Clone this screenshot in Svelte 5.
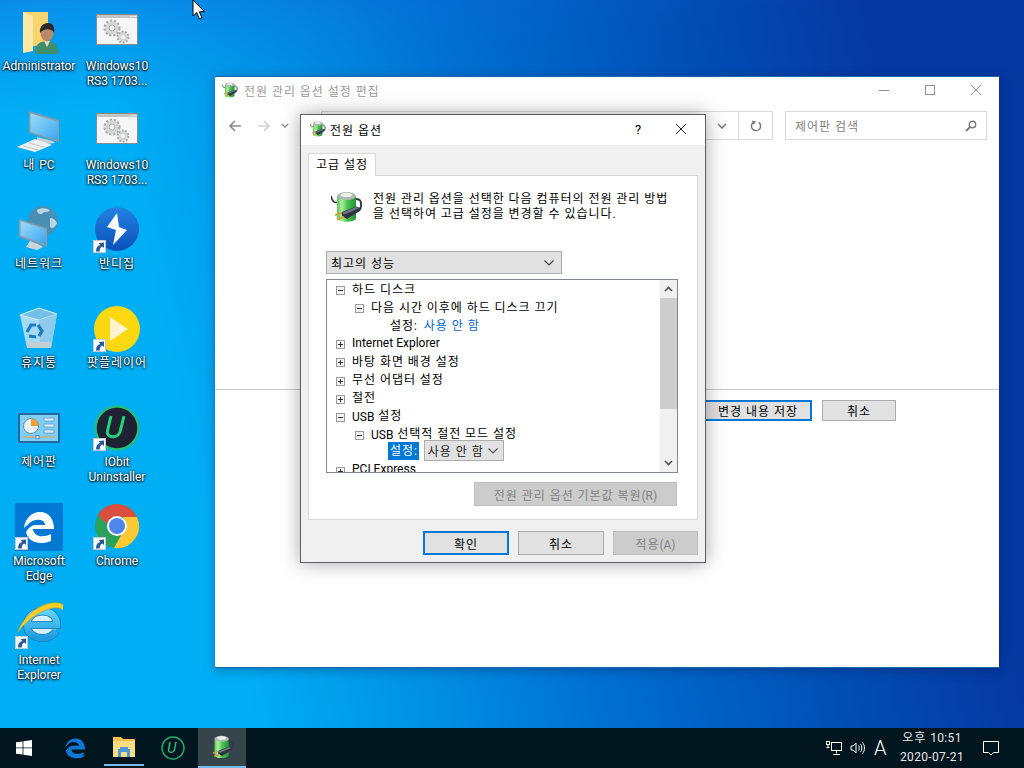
<script>
    const tree = [
        { level: 0, box: 'minus', text: '하드 디스크' },
        { level: 1, box: 'minus', text: '다음 시간 이후에 하드 디스크 끄기' },
        { level: 2, label: '설정:', value: '사용 안 함' },
        { level: 0, box: 'plus', text: 'Internet Explorer' },
        { level: 0, box: 'plus', text: '바탕 화면 배경 설정' },
        { level: 0, box: 'plus', text: '무선 어댑터 설정' },
        { level: 0, box: 'plus', text: '절전' },
        { level: 0, box: 'minus', text: 'USB 설정' },
        { level: 1, box: 'minus', text: 'USB 선택적 절전 모드 설정' },
        { level: 2, label: '설정:', select: '사용 안 함' },
        { level: 0, box: 'plus', text: 'PCI Express' }
    ];

    // latin words get no extra tracking, hangul does
    const runs = (text) => text.split(/([A-Za-z]+(?: [A-Za-z]+)*)/).filter(Boolean);
</script>

{#snippet shortcut()}
    <svg class="shortcut" viewBox="0 0 13 13">
        <rect x="0.5" y="0.5" width="12" height="12" fill="#fff" stroke="#c4c8d0" />
        <path d="M3 11.500 C3 7.500 4.500 5.500 7.200 5 L5.800 3 L11 2.500 L11 8 L9.200 6.400 C7.500 7 6.800 8.500 6.800 11.500Z" fill="#2a5a9e" />
    </svg>
{/snippet}

{#snippet chevron(color)}
    <svg class="chevron" viewBox="0 0 10 6"><path d="M0.5 0.5 L5 5 L9.5 0.5" fill="none" stroke={color} stroke-width="1.2" /></svg>
{/snippet}

{#snippet power(size)}
    <svg width={size} height={size} viewBox="0 0 32 32">
        <defs>
            <linearGradient id="cell" x1="0" x2="1" y1="0" y2="0">
                <stop offset="0" stop-color="#58c556" />
                <stop offset="0.25" stop-color="#aeeea0" />
                <stop offset="0.55" stop-color="#4cc24c" />
                <stop offset="1" stop-color="#23913a" />
            </linearGradient>
        </defs>
        <path d="M0 5 C1 11 4 12 7 11" fill="none" stroke="#343c4a" stroke-width="1.7" />
        <path d="M6 5 L25 5 L25 27 C25 32 6 32 6 27Z" fill="url(#cell)" />
        <ellipse cx="15.500" cy="5" rx="9.500" ry="4" fill="#aeb9b2" />
        <ellipse cx="15.500" cy="4" rx="6" ry="2.200" fill="#eef2ee" />
        <path d="M25 8 C31 8 31 14 29 19" fill="none" stroke="#343c4a" stroke-width="2" />
        <path d="M11 21 L25 15.500 L30 17 L29 20 L16 28 L11 25Z" fill="#2f3642" />
        <path d="M11.500 21.500 L25 16 L28 17.300 L13 23.500Z" fill="#6e7888" />
        <path d="M11 22 L4 24 M13 26 L6 28.500" stroke="#c9a640" stroke-width="2.200" />
    </svg>
{/snippet}

{#snippet gears()}
    <svg width="48" height="48" viewBox="0 0 48 48">
        <rect x="3.500" y="6.500" width="41" height="30" fill="#f6f6f6" stroke="#8b8b8b" />
        <rect x="4" y="7" width="40" height="3" fill="#c4c4c4" />
        <path d="M37 8.500h1.500M39.500 8.500h1.500M42 8.500h1.500" stroke="#fff" />
        <circle cx="19" cy="20" r="5" fill="none" stroke="#d4d6d8" stroke-width="3.500" />
        <circle cx="19" cy="20" r="7.500" fill="none" stroke="#a8aaac" stroke-width="2" stroke-dasharray="2.400 1.700" />
        <circle cx="19" cy="20" r="3" fill="none" stroke="#a8aaac" stroke-width="1" />
        <circle cx="30" cy="29" r="3.500" fill="none" stroke="#d4d6d8" stroke-width="3" />
        <circle cx="30" cy="29" r="5.500" fill="none" stroke="#a8aaac" stroke-width="1.800" stroke-dasharray="2 1.400" />
    </svg>
{/snippet}

<div class="desktop">
    <div class="wall">
        <div class="icons">
            <div class="icon">
                <div class="pic">
                    <svg width="48" height="48" viewBox="0 0 48 48">
                        <path d="M8 4 L33 4 L33 36 L8 40Z" fill="#f8d46e" />
                        <path d="M8 4 L18 8 L18 43 L8 45Z" fill="#fde9a4" />
                        <path d="M20 46 C20 36 25 33 32 33 C39 33 43 36 43 46Z" fill="#3f8f6c" />
                        <path d="M29 33 L32 39 L35 33Z" fill="#e8dccb" />
                        <ellipse cx="32" cy="25" rx="6.500" ry="8.500" fill="#b98a68" />
                        <path d="M25 25 C24 17 30 15 33 15 C38 15 40 19 39 25 C37 20 29 20 25 25Z" fill="#2c2a2a" />
                    </svg>
                </div>
                <span class="lat">Administrator</span>
            </div>
            <div class="icon">
                <div class="pic">
                    <svg width="48" height="48" viewBox="0 0 48 48">
                        <defs>
                            <linearGradient id="screen" x1="0" x2="1" y1="0" y2="1">
                                <stop offset="0" stop-color="#9adcfb" />
                                <stop offset="1" stop-color="#3da6ee" />
                            </linearGradient>
                        </defs>
                        <path d="M14 4 L44 13 L44 35 L14 26Z" fill="#8d9aa6" />
                        <path d="M15.500 6.500 L42.800 14.500 L42.800 33 L15.500 25Z" fill="url(#screen)" />
                        <path d="M22 30 L38 34 L40 36 L32 37 L22 33Z" fill="#c9d0d6" />
                        <path d="M2 40 L20 32 L37 38 L20 45Z" fill="#eef1f3" />
                        <path d="M8 39 L23 43 M14 36 L29 40" stroke="#b4bcc2" stroke-width="0.800" />
                    </svg>
                </div>
                <span>내 <span class="lat">PC</span></span>
            </div>
            <div class="icon">
                <div class="pic">
                    <svg width="48" height="48" viewBox="0 0 48 48">
                        <circle cx="28" cy="15" r="15" fill="#4a8fb6" />
                        <path d="M22 4 C26 1.500 32 2 35 4.500 C32 7 29 5 27 8 C24 8.500 22 7 22 4Z M35 12 C38 12 41 14 42 17 C40 22 37 23 35 21Z" fill="#b8d6e4" />
                        <path d="M4 13 L32 22 L32 41 L4 31Z" fill="#8c99a5" />
                        <path d="M5.500 15 L30.500 23 L30.500 38.500 L5.500 29.500Z" fill="url(#screen)" />
                        <path d="M15 35 L25 39 L28 41 L22 44 L11 41Z" fill="#d0d5da" />
                    </svg>
                </div>
                <span>네트워크</span>
            </div>
            <div class="icon">
                <div class="pic">
                    <svg width="48" height="48" viewBox="0 0 48 48">
                        <path d="M5 10 L24 3 L42 9 L36 43 L12 43Z" fill="#a6dbf4" />
                        <path d="M5 10 L24 3 L42 9 L24 15Z" fill="#74bfe6" stroke="#d6eef9" />
                        <path d="M24 15 L42 9 L36 43 L25 43Z" fill="#8ecbea" />
                        <path d="M12 37 L36 37 L36 43 L12 43Z" fill="#c2ced4" />
                        <path d="M12 27 L16 20 L21 20 M23 20 L27 26 L24 31 M21 32 L14 31" fill="none" stroke="#1d78c8" stroke-width="3.200" />
                    </svg>
                </div>
                <span>휴지통</span>
            </div>
            <div class="icon">
                <div class="pic">
                    <svg width="48" height="48" viewBox="0 0 48 48">
                        <rect x="3" y="9" width="42" height="30" fill="#1e6aa0" />
                        <rect x="5" y="11" width="38" height="26" fill="#80cdf5" />
                        <circle cx="16" cy="22" r="7.500" fill="#e8f2f8" stroke="#6090b0" />
                        <path d="M16 22 L16 14.500 A7.500 7.500 0 0 1 23.500 22Z" fill="#f0a030" />
                        <path d="M29 14h10v3h-10zM29 20h10v3h-10zM29 26h10v3h-10z" fill="#d8ecf8" stroke="#4a8ab8" stroke-width="0.600" />
                        <path d="M8 33h32" stroke="#f0a030" stroke-width="1" />
                        <rect x="21" y="31.500" width="3" height="3" fill="#fff" stroke="#1e6aa0" stroke-width="0.700" />
                    </svg>
                </div>
                <span>제어판</span>
            </div>
            <div class="icon">
                <div class="pic">
                    <svg width="48" height="48" viewBox="0 0 48 48">
                        <rect width="48" height="48" fill="#0078d4" />
                        <path d="M9 25 C10 16 16 9 25 9 C34 9 39 16 39 26 L18 26 C18.500 33 27 35.500 36 31 L36 38 C25 42.500 13 39.500 11 29 C13 25.500 16 22.500 20 22 L30 22 C30 16 20 15 14.500 20 C12.500 22 10.500 23.500 9 25Z" fill="#fff" />
                    </svg>
                    {@render shortcut()}
                </div>
                <span class="lat">Microsoft<br />Edge</span>
            </div>
            <div class="icon">
                <div class="pic">
                    <svg width="48" height="48" viewBox="0 0 48 48">
                        <defs>
                            <linearGradient id="iebody" x1="0" x2="0" y1="0" y2="1">
                                <stop offset="0" stop-color="#5fd2f6" />
                                <stop offset="1" stop-color="#1f9cdf" />
                            </linearGradient>
                        </defs>
                        <ellipse cx="27" cy="22" rx="15" ry="12" fill="#d8f2fc" />
                        <path d="M13 23 L42 23 C42 14 36 9.500 27.500 9.500 C18 9.500 12 15 12 23 C12 31 19 36 27.500 36 C33 36 38 34 41 29" fill="none" stroke="#1878b4" stroke-width="8" />
                        <path d="M13 23 L42 23 C42 14 36 9.500 27.500 9.500 C18 9.500 12 15 12 23 C12 31 19 36 27.500 36 C33 36 38 34 41 29" fill="none" stroke="url(#iebody)" stroke-width="6.500" />
                        <path d="M3 30 C8 14 28 -2 44 1 C52 3 53 8 51 13 C49 7 44 5 38 6 C24 8 10 20 3 30Z" fill="#f6cf2a" stroke="#d49a18" stroke-width="0.600" />
                    </svg>
                    {@render shortcut()}
                </div>
                <span class="lat">Internet<br />Explorer</span>
            </div>
            <div class="icon">
                <div class="pic">{@render gears()}</div>
                <span class="lat">Windows10<br />RS3 1703...</span>
            </div>
            <div class="icon">
                <div class="pic">{@render gears()}</div>
                <span class="lat">Windows10<br />RS3 1703...</span>
            </div>
            <div class="icon">
                <div class="pic">
                    <svg width="48" height="48" viewBox="0 0 48 48">
                        <defs>
                            <linearGradient id="zip" x1="0" x2="0" y1="0" y2="1">
                                <stop offset="0" stop-color="#2283e4" />
                                <stop offset="1" stop-color="#0b50b8" />
                            </linearGradient>
                        </defs>
                        <circle cx="24" cy="23" r="22" fill="url(#zip)" />
                        <path d="M24 7 L14 21 L23 24 L20 39 L34 24 L26 21Z" fill="#fff" />
                    </svg>
                    {@render shortcut()}
                </div>
                <span>반디집</span>
            </div>
            <div class="icon">
                <div class="pic">
                    <svg width="48" height="48" viewBox="0 0 48 48">
                        <circle cx="24" cy="24" r="23" fill="#fbd80f" />
                        <path d="M17 12 L35 24 L17 36Z" fill="#fff4cf" />
                    </svg>
                    {@render shortcut()}
                </div>
                <span>팟플레이어</span>
            </div>
            <div class="icon">
                <div class="pic">
                    <svg width="48" height="48" viewBox="0 0 48 48">
                        <circle cx="24" cy="24" r="21.500" fill="#1e2233" stroke="#22bd7c" stroke-width="2.500" />
                        <path d="M18 12 L14.500 27 C13 34 24 35 27 28 L31 12" fill="none" stroke="#1fd67f" stroke-width="3" />
                    </svg>
                    {@render shortcut()}
                </div>
                <span class="lat">IObit<br />Uninstaller</span>
            </div>
            <div class="icon">
                <div class="pic">
                    <svg width="48" height="48" viewBox="0 0 48 48">
                        <circle cx="24" cy="23" r="22" fill="#2ba25b" />
                        <path d="M5 12 A22 22 0 0 1 44 14 L24 14 C19 14 15 17 14 21Z" fill="#db4d3f" />
                        <path d="M44 14 A22 22 0 0 1 21 45 L31 27 C33 23 33 18 30 14Z" fill="#fcc934" />
                        <circle cx="24" cy="23" r="10" fill="#fff" />
                        <circle cx="24" cy="23" r="8" fill="#4f86ec" />
                    </svg>
                    {@render shortcut()}
                </div>
                <span class="lat">Chrome</span>
            </div>
        </div>

        <section class="window">
            <header class="win-title">
                {@render power(16)}
                <span>전원 관리 옵션 설정 편집</span>
                <div class="win-ctrl">
                    <svg width="12" height="12" viewBox="0 0 12 12"><path d="M1 6.500h10" stroke="#8f8f8f" /></svg>
                    <svg width="12" height="12" viewBox="0 0 12 12"><rect x="1.500" y="1.500" width="9" height="9" fill="none" stroke="#8f8f8f" /></svg>
                    <svg width="12" height="12" viewBox="0 0 12 12"><path d="M1 1l10 10M11 1L1 11" stroke="#8f8f8f" /></svg>
                </div>
            </header>
            <div class="win-nav">
                <svg class="nav-a" width="14" height="14" viewBox="0 0 14 14"><path d="M13 7H2M7 2L2 7l5 5" fill="none" stroke="#8a8a8a" stroke-width="1.600" /></svg>
                <svg class="nav-b" width="14" height="14" viewBox="0 0 14 14"><path d="M1 7h11M7 2l5 5-5 5" fill="none" stroke="#d0d0d0" stroke-width="1.600" /></svg>
                <svg class="nav-c" width="8" height="5" viewBox="0 0 8 5"><path d="M1 1l3 3 3-3" fill="none" stroke="#888" stroke-width="1.300" /></svg>
                <div class="address">
                    <div class="addr-down"><svg width="10" height="6" viewBox="0 0 10 6"><path d="M1 1l4 4 4-4" fill="none" stroke="#777" stroke-width="1.500" /></svg></div>
                    <div class="addr-refresh">
                        <svg width="12" height="12" viewBox="0 0 12 12"><path d="M8.800 2.400 A4.600 4.600 0 1 1 3 2.600" fill="none" stroke="#777" stroke-width="1.400" /><path d="M2 0.500 L6 1.500 L3.500 4.800Z" fill="#777" /></svg>
                    </div>
                </div>
                <div class="search">
                    <span>제어판 검색</span>
                    <svg width="12" height="12" viewBox="0 0 12 12"><circle cx="7.500" cy="4.500" r="3.200" fill="none" stroke="#777" stroke-width="1.400" /><path d="M5 7L1 11" stroke="#777" stroke-width="1.800" /></svg>
                </div>
            </div>
            <div class="win-body"></div>
            <footer class="win-foot">
                <button class="btn primary">변경 내용 저장</button>
                <button class="btn cancel">취소</button>
            </footer>
        </section>

        <section class="dialog">
            <header class="dlg-title">
                {@render power(16)}
                <span>전원 옵션</span>
                <b class="help">?</b>
                <svg class="close" width="12" height="12" viewBox="0 0 12 12"><path d="M1 1l10 10M11 1L1 11" stroke="#222" stroke-width="1" /></svg>
            </header>
            <div class="dlg-body">
                <div class="tabs"><div class="tab">고급 설정</div></div>
                <div class="panel">
                    <div class="intro">
                        {@render power(32)}
                        <p>전원 관리 옵션을 선택한 다음 컴퓨터의 전원 관리 방법<br />을 선택하여 고급 설정을 변경할 수 있습니다.</p>
                    </div>
                    <div class="plan">
                        <span>최고의 성능</span>
                        {@render chevron('#444')}
                    </div>
                    <div class="list">
                        <div class="rows">
                            {#each tree as row}
                                <div class="row lv{row.level}">
                                    {#if row.box}
                                        <svg class="box" width="9" height="9" viewBox="0 0 9 9">
                                            <rect x="0.500" y="0.500" width="8" height="8" fill="#f4f4f4" stroke="#9a9a9a" />
                                            <path d="M2 4.500h5" stroke="#333" />
                                            {#if row.box === 'plus'}<path d="M4.500 2v5" stroke="#333" />{/if}
                                        </svg>
                                    {/if}
                                    {#if row.text}
                                        <span class="label">
                                            {#each runs(row.text) as part}
                                                <span class:lat={/^[A-Za-z]/.test(part)}>{part}</span>
                                            {/each}
                                        </span>
                                    {/if}
                                    {#if row.label && row.value}
                                        <span>{row.label}</span><a class="link" href="#top">{row.value}</a>
                                    {/if}
                                    {#if row.select}
                                        <span class="picked">{row.label}</span>
                                        <div class="pick-box"><span>{row.select}</span>{@render chevron('#555')}</div>
                                    {/if}
                                </div>
                            {/each}
                        </div>
                        <div class="scroll">
                            <svg width="9" height="6" viewBox="0 0 9 6"><path d="M1 5l3.500-3.500L8 5" fill="none" stroke="#555" stroke-width="1.600" /></svg>
                            <div class="track"><div class="thumb"></div></div>
                            <svg width="9" height="6" viewBox="0 0 9 6"><path d="M1 1l3.500 3.500L8 1" fill="none" stroke="#555" stroke-width="1.600" /></svg>
                        </div>
                    </div>
                    <div class="restore"><button class="btn off wide">전원 관리 옵션 기본값 복원<span class="lat">(R)</span></button></div>
                </div>
                <div class="actions">
                    <button class="btn act primary2">확인</button>
                    <button class="btn act">취소</button>
                    <button class="btn act off last">적용<span class="lat">(A)</span></button>
                </div>
            </div>
        </section>

        <svg class="cursor" width="14" height="20" viewBox="0 0 14 20">
            <path d="M1 0 L1 16 L4.800 12.600 L7.400 19 L10 18 L7.400 11.800 L12.400 11.600Z" fill="#fff" stroke="#000" stroke-width="1" />
        </svg>
    </div>

    <footer class="taskbar">
        <div class="task start">
            <svg width="16" height="16" viewBox="0 0 16 16"><path d="M0 2.300L6.600 1.400V7.500H0ZM7.400 1.300L16 0V7.500H7.400ZM0 8.300H6.600V14.600L0 13.700ZM7.400 8.300H16V16L7.400 14.800Z" fill="#fff" /></svg>
        </div>
        <div class="task">
            <svg width="22" height="22" viewBox="0 0 48 48"><path d="M3 24 C4 12 13 3 26 3 C38 3 46 12 46 27 L16 27 C17 37 31 40 43 33 L43 43 C27 50 7 46 4 30 C8 23 13 20 18 19 L33 19 C32 10 17 8 10 15 C7 18 4 21 3 24Z" fill="#0f78d6" /></svg>
        </div>
        <div class="task open">
            <svg width="22" height="20" viewBox="0 0 22 20">
                <path d="M0 0h8l2 2h12v18H0Z" fill="#f3c150" />
                <path d="M0 4h22v16H0Z" fill="#fbdc82" />
                <path d="M7 10h8v2h2v8h-3v-5H8v5H5v-8h2Z" fill="#4b9ad8" />
            </svg>
        </div>
        <div class="task">
            <svg width="24" height="24" viewBox="0 0 24 24"><circle cx="12" cy="12" r="11" fill="none" stroke="#1fae74" stroke-width="1.400" /><path d="M9 6L7.600 13.500C7 17 12 17.500 13.400 14L15 6" fill="none" stroke="#1fbd7a" stroke-width="1.500" /></svg>
        </div>
        <div class="task active">{@render power(24)}</div>

        <div class="tray">
            <svg width="16" height="16" viewBox="0 0 16 16" fill="none" stroke="#fff"><rect x="5.500" y="2.500" width="10" height="8" /><path d="M10.500 10.500v3M7 14.500h7" /><rect x="0.500" y="1.500" width="3" height="3" /><path d="M2 4.500v3M0.500 7.500h3" /></svg>
            <svg width="16" height="16" viewBox="0 0 16 16" fill="none" stroke="#fff"><path d="M1 6h2l3-3v10l-3-3H1Z" /><path d="M8.500 5.500c1 1.400 1 3.600 0 5M10.500 4c1.800 2.200 1.800 5.800 0 8M12.500 2.500c2.600 3 2.600 8 0 11" /></svg>
            <span class="ime lat">A</span>
            <div class="clock"><span>오후 <span class="digits">10:51</span></span><span class="digits">2020-07-21</span></div>
            <svg class="notify" width="16" height="16" viewBox="0 0 16 16"><path d="M0.500 1.500h15v11h-5l-2.500 2.500-2.500-2.500h-5Z" fill="none" stroke="#fff" /></svg>
        </div>
    </footer>
</div>

<style>
    :global(body) {
        margin: 0;
    }

    .desktop {
        width: 1024px;
        height: 768px;
        display: flex;
        flex-direction: column;
        overflow: hidden;
        font-family: Roboto, "Noto Sans CJK KR", sans-serif;
        font-size: 12px;
        letter-spacing: 0.95px;
    }

    .lat {
        letter-spacing: 0;
    }

    .wall {
        position: relative;
        flex: 1;
        background:
            linear-gradient(172deg, rgba(24, 90, 215, 0.4) 0, rgba(24, 100, 220, 0.15) 70px, rgba(0, 0, 0, 0) 120px),
            linear-gradient(77deg, #00aef5 249px, #0090e4 424px, #0070d2 590px, #0050b6 814px, #0638a2 1003px);
    }

    /* desktop icons */
    .icons {
        display: grid;
        grid-auto-flow: column;
        grid-template-rows: repeat(7, 99px);
        grid-template-columns: 78px 78px;
    }

    .icon {
        display: flex;
        flex-direction: column;
        align-items: center;
        padding-top: 8px;
        color: #fff;
        text-align: center;
        line-height: 15px;
        text-shadow: 0 0 3px #000, 0 1px 2px #000;
    }

    .icon > span {
        margin-top: 3px;
        white-space: nowrap;
    }

    .pic {
        position: relative;
        width: 48px;
        height: 48px;
    }

    .pic svg {
        display: block;
    }

    .pic :global(.shortcut) {
        position: absolute;
        left: 0;
        bottom: 1px;
        width: 13px;
        height: 13px;
    }

    /* control panel window */
    .window {
        position: absolute;
        left: 215px;
        top: 76px;
        width: 784px;
        height: 592px;
        display: flex;
        flex-direction: column;
        background: #fff;
        border-top: 1px solid #1e6aa8;
        border-bottom: 1px solid #1e6aa8;
        box-sizing: border-box;
        box-shadow: 0 2px 10px rgba(0, 20, 60, 0.35);
    }

    .win-title {
        display: flex;
        align-items: center;
        height: 26px;
        padding-left: 7px;
        color: #9a9a9a;
    }

    .win-title span {
        margin-left: 6px;
    }

    .win-ctrl {
        display: flex;
        gap: 34px;
        margin-left: auto;
        margin-right: 17px;
    }

    .win-nav {
        display: flex;
        align-items: center;
        height: 29px;
        margin-top: 8px;
        padding-left: 13px;
    }

    .nav-b {
        margin-left: 15px;
    }

    .nav-c {
        margin-left: 10px;
    }

    .address {
        display: flex;
        justify-content: flex-end;
        align-items: stretch;
        width: 452px;
        height: 29px;
        margin-left: 32px;
        border: 1px solid #d9d9d9;
        box-sizing: border-box;
    }

    .addr-down {
        display: flex;
        align-items: center;
        justify-content: center;
        width: 32px;
    }

    .addr-refresh {
        display: flex;
        align-items: center;
        justify-content: center;
        width: 33px;
        border-left: 1px solid #d9d9d9;
    }

    .search {
        display: flex;
        align-items: center;
        justify-content: space-between;
        width: 202px;
        height: 29px;
        margin-left: 12px;
        padding: 0 9px 0 9px;
        border: 1px solid #d9d9d9;
        box-sizing: border-box;
        color: #808080;
    }

    .win-body {
        height: 249px;
        border-bottom: 1px solid #c8c8c8;
    }

    .win-foot {
        display: flex;
        gap: 10px;
        padding: 10px 0 0 489px;
    }

    .btn {
        height: 21px;
        padding: 0;
        background: #e1e1e1;
        border: 1px solid #adadad;
        color: #000;
        font: inherit;
        letter-spacing: inherit;
    }

    .btn.primary {
        width: 108px;
        border: 2px solid #0078d7;
    }

    .btn.cancel {
        width: 74px;
    }

    /* power options dialog */
    .dialog {
        position: absolute;
        left: 300px;
        top: 114px;
        width: 406px;
        height: 449px;
        display: flex;
        flex-direction: column;
        box-sizing: border-box;
        border: 1px solid #5d6064;
        background: #fff;
        box-shadow: 0 0 18px rgba(0, 0, 0, 0.35);
        color: #000;
    }

    .dlg-title {
        display: flex;
        align-items: center;
        height: 30px;
        box-sizing: border-box;
        padding: 0 0 2px 9px;
    }

    .dlg-title span {
        margin-left: 4px;
    }

    .help {
        margin-left: auto;
        font-weight: 400;
        font-size: 13px;
    }

    .close {
        margin: 0 18px 0 33px;
    }

    .dlg-body {
        flex: 1;
        display: flex;
        flex-direction: column;
        background: #f0f0f0;
        padding: 8px 7px 0;
    }

    .tabs {
        display: flex;
        height: 22px;
    }

    .tab {
        width: 68px;
        height: 23px;
        line-height: 22px;
        text-align: center;
        box-sizing: border-box;
        background: #fff;
        border: 1px solid #d9d9d9;
        border-bottom: 0;
        position: relative;
        z-index: 1;
    }

    .panel {
        height: 345px;
        box-sizing: border-box;
        border: 1px solid #d9d9d9;
        background: #fff;
        padding: 0 18px 0 17px;
    }

    .intro {
        display: flex;
        gap: 10px;
        padding: 15px 0 0 5px;
        height: 60px;
    }

    .intro svg {
        flex: none;
    }

    .intro p {
        margin: 1px 0 0;
        line-height: 15px;
        white-space: nowrap;
    }

    .plan {
        display: flex;
        align-items: center;
        justify-content: space-between;
        width: 236px;
        height: 23px;
        box-sizing: border-box;
        padding: 0 4px;
        background: #e1e1e1;
        border: 1px solid #adadad;
    }

    .chevron {
        width: 10px;
        height: 6px;
        margin-right: 3px;
    }

    .list {
        display: flex;
        width: 352px;
        height: 194px;
        margin-top: 5px;
        box-sizing: border-box;
        border: 1px solid #828790;
        overflow: hidden;
    }

    .rows {
        flex: 1;
        overflow: hidden;
        margin-top: -1px;
    }

    .row {
        display: flex;
        align-items: center;
        height: 18.1px;
        white-space: nowrap;
    }

    .row .box {
        flex: none;
        margin: 5px 7px 0 0;
    }

    .label {
        white-space: pre;
    }

    .label .lat {
        vertical-align: -1px;
    }

    .lv0 {
        padding-left: 9px;
    }

    .lv1 {
        padding-left: 28px;
    }

    .lv2 {
        padding-left: 63px;
    }

    .link {
        margin-left: 6px;
        color: #0066cc;
        text-decoration: none;
    }

    .picked {
        margin-left: -2px;
        padding: 0 1px 0 2px;
        height: 18px;
        line-height: 18px;
        background: #0078d7;
        color: #fff;
    }

    .pick-box {
        display: flex;
        align-items: center;
        justify-content: space-between;
        width: 80px;
        height: 21px;
        margin-left: 5px;
        padding: 0 2px 0 3px;
        box-sizing: border-box;
        background: #e1e1e1;
        border: 1px solid #adadad;
        color: #222;
    }

    .scroll {
        display: flex;
        flex-direction: column;
        align-items: center;
        justify-content: space-between;
        width: 17px;
        padding: 6px 0;
        box-sizing: border-box;
        background: #f0f0f0;
    }

    .track {
        width: 100%;
        flex: 1;
        padding-top: 6px;
        box-sizing: border-box;
    }

    .thumb {
        height: 111px;
        background: #cdcdcd;
    }

    .restore {
        display: flex;
        justify-content: flex-end;
        margin: 9px 0 0;
        padding-right: 2px;
    }

    .btn.wide {
        width: 203px;
        height: 24px;
    }

    .btn.off {
        background: #cccccc;
        border-color: #bfbfbf;
        color: #838383;
    }

    .actions {
        display: flex;
        justify-content: flex-end;
        gap: 9px;
        padding-top: 11px;
    }

    .btn.act {
        width: 86px;
        height: 24px;
    }

    .btn.act.last {
        width: 85px;
    }

    .btn.primary2 {
        border: 2px solid #0078d7;
    }

    .cursor {
        position: absolute;
        left: 192px;
        top: 0;
    }

    /* taskbar */
    .taskbar {
        display: flex;
        height: 40px;
        flex: none;
        gap: 1px;
        background: #02161f;
        color: #fff;
    }

    .task {
        display: flex;
        align-items: center;
        justify-content: center;
        width: 48px;
        box-sizing: border-box;
    }

    .task.start {
        margin-right: 2px;
    }

    .task.open {
        border-bottom: 2px solid transparent;
        background: linear-gradient(#76b9ed, #76b9ed) no-repeat 4px 100% / 40px 2px;
    }

    .task.active {
        background: #36454c;
        border-bottom: 2px solid #76b9ed;
    }

    .tray {
        display: flex;
        align-items: center;
        margin-left: auto;
        padding-right: 25px;
    }

    .tray svg {
        margin-right: 8px;
    }

    .ime {
        width: 14px;
        margin-right: 10px;
        font-size: 20px;
        font-weight: 300;
    }

    .clock {
        display: flex;
        flex-direction: column;
        align-items: center;
        width: 68px;
        line-height: 19px;
        color: #e8e8e8;
    }

    .digits {
        letter-spacing: 0.35px;
    }

    .tray .notify {
        margin: 0 0 0 17px;
    }
</style>
